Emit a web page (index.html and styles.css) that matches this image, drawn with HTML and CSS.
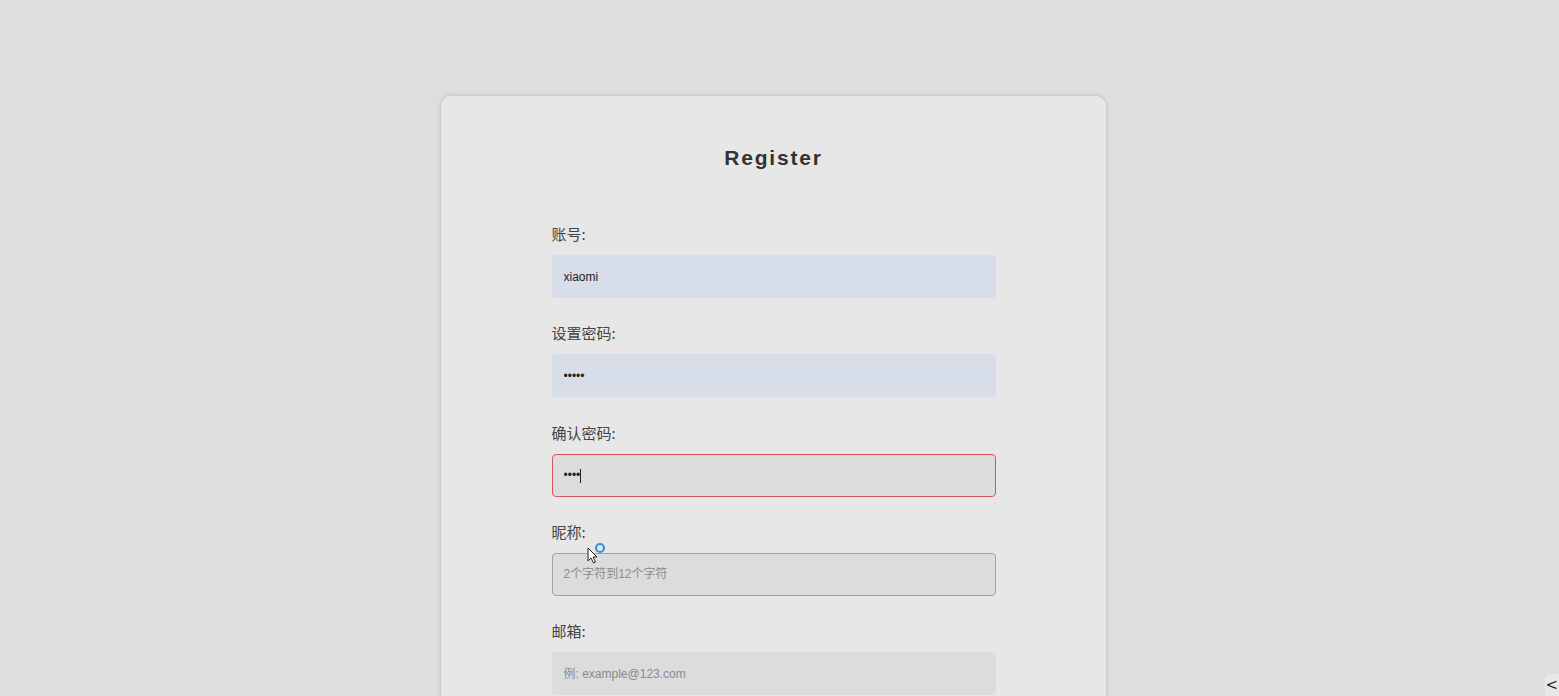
FILE: index.html
```html
<!DOCTYPE html>
<html lang="zh-CN">
<head>
<meta charset="utf-8">
<title>Register</title>
<link rel="stylesheet" href="styles.css">
</head>
<body>
<div class="page">
  <div class="card">
    <h2 class="title">Register</h2>
    <form class="form">
      <div class="field">
        <label class="label">账号:</label>
        <input class="input input-autofill" type="text" value="xiaomi">
      </div>
      <div class="field">
        <label class="label">设置密码:</label>
        <input class="input input-autofill" type="password" value="12345">
      </div>
      <div class="field">
        <label class="label">确认密码:</label>
        <div class="input-wrap">
          <input class="input input-error" type="password" value="1234">
          <span class="caret"></span>
        </div>
      </div>
      <div class="field">
        <label class="label">昵称:</label>
        <div class="input-wrap">
          <input class="input input-hover" type="text" placeholder="2个字符到12个字符">
          <svg class="pointer" width="30" height="22" viewBox="0 0 30 22">
            <path d="M1 1 L1 14 L4 11 L6.5 16 L8.5 15 L6 10 L10 10 Z" fill="#fff" stroke="#222" stroke-width="1"/>
            <circle cx="13" cy="1" r="4" fill="none" stroke="#3d8fdc" stroke-width="2.2"/>
          </svg>
        </div>
      </div>
      <div class="field">
        <label class="label">邮箱:</label>
        <input class="input" type="text" placeholder="例: example@123.com">
      </div>
    </form>
  </div>
</div>
<div class="side-tab">&lt;</div>
</body>
</html>
```

FILE: styles.css
```css
html, body {
  margin: 0;
  padding: 0;
  height: 696px;
  overflow: hidden;
}
body {
  background: #dedede;
  font-family: "Liberation Sans", Arial, "Noto Sans CJK SC", sans-serif;
  color: #444;
}
.page {
  width: calc(100% - 12px);
  padding-top: 96px;
}
.card {
  width: 665px;
  margin: 0 auto;
  background: #e7e7e7;
  border-radius: 10px;
  box-shadow: 0 0 4px rgba(0, 0, 0, 0.18);
  padding: 50px 0 60px;
  box-sizing: border-box;
  min-height: 800px;
}
.title {
  margin: 0;
  text-align: center;
  font-size: 21px;
  line-height: 24px;
  font-weight: bold;
  letter-spacing: 1.8px;
  color: #333;
}
.form {
  width: 444px;
  margin: 54px auto 0;
  display: flex;
  flex-direction: column;
  gap: 25.25px;
}
.field {
  display: flex;
  flex-direction: column;
  gap: 11px;
}
.label {
  font-family: "Noto Sans CJK SC", sans-serif;
  font-size: 15px;
  line-height: 20px;
  color: #444;
}
.input-wrap {
  position: relative;
}
.input {
  display: block;
  width: 100%;
  height: 43px;
  box-sizing: border-box;
  border: 1px solid transparent;
  border-radius: 4px;
  background: #dcdcdc;
  padding: 0 11px;
  font-family: "Liberation Sans", Arial, "Noto Sans CJK SC", sans-serif;
  font-size: 12px;
  color: #222;
  outline: none;
}
.input::placeholder {
  color: #8a8a8a;
  font-family: "Liberation Sans", Arial, "Noto Sans CJK SC", sans-serif;
}
.input-autofill {
  background: #d7dde9;
}
.input-error {
  border-color: #d9535e;
}
.input-hover {
  border-color: #a2a2a2;
}
.caret {
  position: absolute;
  left: 28px;
  top: 15px;
  width: 1px;
  height: 14px;
  background: #222;
}
.pointer {
  position: absolute;
  left: 35px;
  top: -6px;
  overflow: visible;
}
.side-tab {
  position: fixed;
  right: 0;
  bottom: 0;
  width: 13px;
  height: 22px;
  background: #e8e8e8;
  border-radius: 6px 0 0 0;
  font-family: "DejaVu Sans", sans-serif;
  font-size: 15px;
  line-height: 22px;
  color: #222;
  text-align: right;
  padding-right: 1px;
}
```
